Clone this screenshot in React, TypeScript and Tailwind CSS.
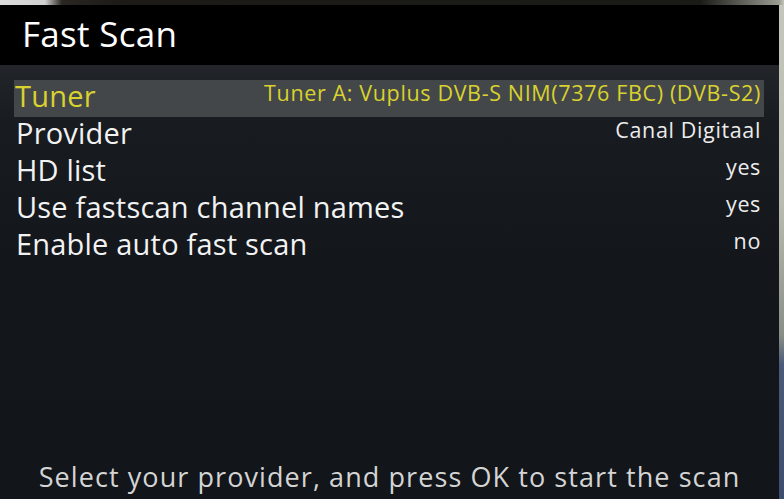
import React from "react";

const rows = [
  { label: "Tuner", value: "Tuner A: Vuplus DVB-S NIM(7376 FBC) (DVB-S2)", selected: true },
  { label: "Provider", value: "Canal Digitaal" },
  { label: "HD list", value: "yes" },
  { label: "Use fastscan channel names", value: "yes" },
  { label: "Enable auto fast scan", value: "no" },
];

export default function App() {
  return (
    <div
      className="w-[784px] h-[499px] overflow-hidden flex flex-col bg-[#1b1a17]"
      style={{ fontFamily: "'Open Sans', 'Noto Sans', sans-serif" }}
    >
      <div className="h-[5px] shrink-0 bg-[linear-gradient(90deg,#dcdcdc_0px,#d0d0d0_45px,#2a2622_62px,#1c1b18_120px,#1a1a17_700px,#9a9c92_779px,#c3c6bb_784px)]" />
      <div className="flex flex-1 min-h-0">
        <div className="w-[779px] flex flex-col">
          <div className="h-[60px] shrink-0 bg-black flex items-center pl-[22px] pb-[4px]">
            <span className="text-[35px] leading-none text-white tracking-[0.3px]">Fast Scan</span>
          </div>
          <div className="flex-1 flex flex-col bg-[linear-gradient(180deg,#22252a_0px,#181b20_60px,#13161b_200px,#12151a_100%)]">
            <div className="pt-[15px] pl-[14px] pr-[15px] flex flex-col">
              {rows.map((r) => (
                <div
                  key={r.label}
                  className={`h-[37px] flex items-center justify-between pr-[3px] ${
                    r.selected ? "bg-[#43474a] pl-[1px]" : "pl-[2px]"
                  }`}
                >
                  <span
                    className={`text-[29px] leading-none whitespace-nowrap tracking-[0.2px] mb-[6px] ${
                      r.selected ? "text-[#d9d22e]" : "text-[#f2f2f2]"
                    }`}
                  >
                    {r.label}
                  </span>
                  <span
                    className={`text-[21.5px] leading-none whitespace-nowrap tracking-[0.64px] mb-[11px] ${
                      r.selected ? "text-[#d9d22e]" : "text-[#ececec]"
                    }`}
                  >
                    {r.value}
                  </span>
                </div>
              ))}
            </div>
            <div className="flex-1" />
            <div className="h-[40px] flex items-center justify-center pb-[6px]">
              <span className="text-[27px] leading-none text-[#d4d4d4] whitespace-nowrap tracking-[1.08px]">
                Select your provider, and press OK to start the scan
              </span>
            </div>
          </div>
        </div>
        <div className="w-[5px] bg-[linear-gradient(180deg,#c3c6bb_0px,#b8bcb0_200px,#8a8f86_330px,#4a5a78_360px,#3c4c6c_499px)]" />
      </div>
    </div>
  );
}
